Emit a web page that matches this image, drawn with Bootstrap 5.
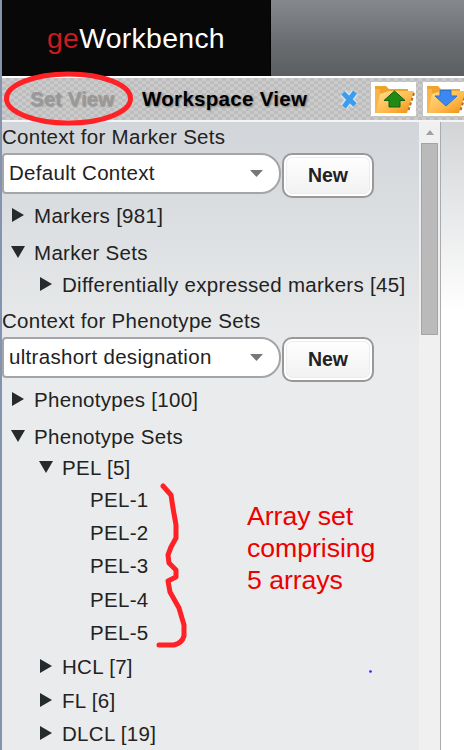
<!DOCTYPE html>
<html lang="en">
<head>
<meta charset="utf-8">
<meta name="viewport" content="width=device-width, initial-scale=1">
<title>geWorkbench</title>
<link href="https://cdn.jsdelivr.net/npm/bootstrap@5.3.0/dist/css/bootstrap.min.css" rel="stylesheet">
<style>
body{font-family:"Liberation Sans",Arial,sans-serif;font-size:20.5px;letter-spacing:.3px;color:#222;background:#fff}
.app{width:464px;height:750px;border-left:2px solid #8494b0}
.top-bar{height:76px;background:linear-gradient(#85888c,#696c6f 60%,#5c5f62)}
.brand{width:269px;background:#080808;color:#fff;font-size:28.4px;letter-spacing:.3px;padding-left:45px;border-right:1px solid #000}
.brand span{color:#cb1b1d}
.tool-bar{height:46px;border-top:2px solid #fff;border-bottom:2px solid #f4f4f4;
background:conic-gradient(#bdbdbd 25%,#cbcbcb 0 50%,#bdbdbd 0 75%,#cbcbcb 0) 0 0/8px 6px;font-weight:bold;padding-left:28px}
.view-off{color:#999;width:112px;letter-spacing:0;text-shadow:1px 1px 1px #999}
.view-on{color:#000;width:197px;text-shadow:1px 1px 2px #777}
.tools{margin-left:12px}
.panel{width:417px;background:linear-gradient(#d2d5d9,#e9ebec 230px)}
.ctx{height:30px;line-height:30px}
.ctx2{height:33px;line-height:33px;margin:4px 0 -1px}
.picker{height:46px;padding-top:1px}
.combo{width:279px;height:41px;background:#fff;border:2px solid #a3a5a8;border-radius:4px 20px 20px 4px;padding:0 16px 0 5px}
.btn-new{width:92px;height:45px;margin-left:1px;border:2px solid #999;border-radius:10px;font-weight:bold;font-size:19.5px;line-height:38px;background:linear-gradient(#fff,#f1f1f1);color:#222;box-shadow:inset 0 0 0 2px #fff,inset 0 0 0 3px #ececec}
.btn-new.p-0{padding-bottom:2px!important}
.node{height:33px;line-height:30px;padding:3px 0 0 9px}
.node svg{width:14px;height:14px;margin:0 9px 3px 0;fill:#252a2d}
.l2{padding-left:37px}.l3{padding-left:88px}
.up2{margin-bottom:-2px}.up1{margin-bottom:-1px}.dn1{margin-bottom:1px}.dn4{margin-bottom:4px}
.scroller{width:21px;background:#f0f0f0}
.thumb{width:17px;height:192px;background:#bababa;border:1px solid #a4a4a4;margin-top:8px}
.canvas-side{border-left:1px solid #a9abae;background:linear-gradient(#d2d4d6,#fff 190px)}
.ink{left:0;top:0;pointer-events:none}
.note{left:247px;top:500px;color:#ed0000;font-size:26.67px;line-height:32px;letter-spacing:-.05px}
</style>
<script src="https://cdn.jsdelivr.net/npm/bootstrap@5.3.0/dist/js/bootstrap.bundle.min.js"></script>
</head>
<body class="overflow-hidden">
<svg class="d-none"><symbol id="r" viewBox="0 0 14 14"><path d="M1 0L13 7L1 14Z"/></symbol><symbol id="d" viewBox="0 0 14 14"><path d="M0 1H14L7 13Z"/></symbol></svg>
<div class="app d-flex flex-column position-relative">
  <header class="top-bar d-flex flex-shrink-0"><div class="brand d-flex align-items-center"><span>ge</span>Workbench</div></header>
  <nav class="tool-bar d-flex align-items-center flex-shrink-0 overflow-hidden">
    <div class="view-off flex-shrink-0">Set View</div>
    <div class="view-on flex-shrink-0">Workspace View</div>
    <svg class="flex-shrink-0" width="20" height="22" viewBox="0 0 20 22"><path d="M4 5L16 17M16 4L5 19" stroke="#d3e9fb" stroke-width="7.500"/><path d="M4 5L16 17M16 4L5 19" stroke="#3d9cec" stroke-width="5"/></svg>
    <svg class="tools flex-shrink-0" width="97" height="34" viewBox="0 0 97 34">
      <defs><linearGradient id="g" x2="1" y2="1"><stop stop-color="#ffe08c"/><stop offset=".6" stop-color="#fdb648"/><stop offset="1" stop-color="#f08a0c"/></linearGradient></defs>
      <g id="f"><path fill="#fff" d="M0 0H45V34H0Z"/><path fill="#f0a32b" d="M4 4H15L18 7H37V12H4Z"/><path fill="#fbb445" d="M4 7H9V31H4Z"/><path fill="url(#g)" d="M9 12L18 9H43L36 31H5Z"/><path d="M43 11L37 30" stroke="#a8741d" stroke-width="2" stroke-dasharray="3 2"/></g>
      <use href="#f" x="52"/>
      <path d="M23.500 9L34 18.500H29V25H18V18.500H13Z" fill="#218a17" stroke="#11600c"/>
      <path d="M69 8.500H80V14H86L75 24L64 14H69Z" fill="#3c88f0" stroke="#2f6fd0"/>
    </svg>
  </nav>
  <div class="d-flex flex-grow-1 overflow-hidden">
    <main class="panel flex-shrink-0">
      <div class="ctx">Context for Marker Sets</div>
      <div class="picker d-flex"><div class="combo d-flex align-items-center justify-content-between">Default Context<svg width="13" height="7"><path d="M0 0H13L6.500 7Z" fill="#777"/></svg></div><button class="btn-new p-0">New</button></div>
      <div class="node dn4 d-flex align-items-center"><svg><use href="#r"/></svg>Markers [981]</div>
      <div class="node up1 d-flex align-items-center"><svg><use href="#d"/></svg>Marker Sets</div>
      <div class="node l2 d-flex align-items-center"><svg><use href="#r"/></svg>Differentially expressed markers [45]</div>
      <div class="ctx2">Context for Phenotype Sets</div>
      <div class="picker d-flex"><div class="combo d-flex align-items-center justify-content-between">ultrashort designation<svg width="13" height="7"><path d="M0 0H13L6.500 7Z" fill="#777"/></svg></div><button class="btn-new p-0">New</button></div>
      <div class="node dn4 d-flex align-items-center"><svg><use href="#r"/></svg>Phenotypes [100]</div>
      <div class="node up2 d-flex align-items-center"><svg><use href="#d"/></svg>Phenotype Sets</div>
      <div class="node l2 up1 d-flex align-items-center"><svg><use href="#d"/></svg>PEL [5]</div>
      <div class="node l3">PEL-1</div>
      <div class="node l3">PEL-2</div>
      <div class="node l3 dn1">PEL-3</div>
      <div class="node l3">PEL-4</div>
      <div class="node l3 dn1">PEL-5</div>
      <div class="node l2 dn1 d-flex align-items-center"><svg><use href="#r"/></svg>HCL [7]</div>
      <div class="node l2 d-flex align-items-center"><svg><use href="#r"/></svg>FL [6]</div>
      <div class="node l2 d-flex align-items-center"><svg><use href="#r"/></svg>DLCL [19]</div>
    </main>
    <div class="scroller d-flex flex-column align-items-center flex-shrink-0"><svg class="mt-2 flex-shrink-0" width="8" height="5"><path d="M0 5L4 0L8 5Z" fill="#a0a0a0"/></svg><div class="thumb"></div></div>
    <aside class="canvas-side flex-grow-1"></aside>
  </div>
</div>
<svg class="ink position-absolute" width="464" height="750" fill="none" stroke="#fe2125" stroke-width="5" stroke-linecap="round" stroke-linejoin="round">
  <ellipse cx="68.500" cy="98.500" rx="62" ry="24.500"/>
  <path d="M163 486L171 495L173 508L176 525V538L171 547L168 555L169 563L176 570V577L168 581L170 592L179 608L184 625V636Q182 643 174 645H159"/>
  <circle cx="370.500" cy="671.500" r="1.300" fill="#22f" stroke="none"/>
</svg>
<div class="note position-absolute">Array set<br>comprising<br>5 arrays</div>
</body>
</html>
